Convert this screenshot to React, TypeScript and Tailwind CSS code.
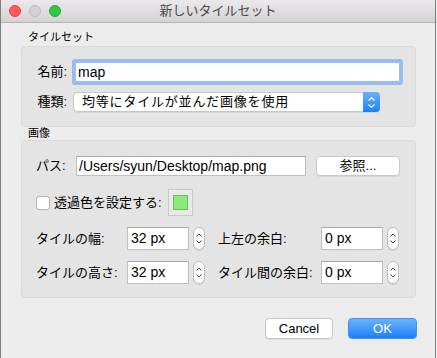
import React from "react";

const font = "font-['Liberation_Sans','Noto_Sans_CJK_JP',sans-serif]";

function Stepper() {
  return (
    <div className="w-[12px] h-[23px] rounded-[6px] border border-[#bdbdbd] bg-white flex flex-col items-center justify-center gap-[3px] shadow-[0_1px_0_rgba(0,0,0,0.08)]">
      <svg width="6" height="4" viewBox="0 0 6 4"><path d="M0.5 3.5 L3 1 L5.5 3.5" fill="none" stroke="#444" strokeWidth="1" /></svg>
      <svg width="6" height="4" viewBox="0 0 6 4"><path d="M0.5 0.5 L3 3 L5.5 0.5" fill="none" stroke="#444" strokeWidth="1" /></svg>
    </div>
  );
}

function NumField({ value }: { value: string }) {
  return (
    <div className="flex items-center gap-[4px]">
      <div className="w-[62px] h-[23px] bg-white border border-[#c0c0c0] border-t-[#a9a9a9] flex items-center pl-[3px] text-[14px] text-black">
        {value}
      </div>
      <Stepper />
    </div>
  );
}

export default function App() {
  return (
    <div className={`${font} w-[437px] h-[358px] bg-[#ececec]`}>
      <div className="w-[436px] h-[358px] border-l border-r border-[#7f7f7f] bg-[#ececec] flex flex-col">
        {/* title bar */}
        <div className="h-[23px] border-b border-[#b3b3b3] bg-gradient-to-b from-[#ebe9eb] to-[#d4d2d4] grid grid-cols-[1fr_auto_1fr] items-center">
          <div className="flex items-center gap-[8px] pl-[8px]">
            <div className="w-[12px] h-[12px] rounded-full bg-[#fc5f57] border border-[#e0443e]" />
            <div className="w-[12px] h-[12px] rounded-full bg-[#d2d1d2] border border-[#bfbebf]" />
            <div className="w-[12px] h-[12px] rounded-full bg-[#33c748] border border-[#27aa35]" />
          </div>
          <div className="text-[13px] text-[#4a4a4a] leading-[22px]">新しいタイルセット</div>
          <div />
        </div>

        {/* body */}
        <div className="flex flex-col pl-[20px]">
          <div className="text-[11px] leading-[14px] mt-[7px] pl-[7px] text-black">タイルセット</div>
          <div className="mt-[2px] w-[395px] h-[81px] rounded-[4px] border border-[#dadada] bg-[#e4e4e4] flex flex-col pt-[15px]">
            <div className="flex items-center">
              <div className="w-[46px] text-right text-[13px] text-black leading-[20px] pr-[1px]">名前:</div>
              <div className="ml-[7px] w-[325px] h-[20px] bg-white border border-[#9cbde9] shadow-[0_0_0_3px_#95bdf0] rounded-[1px] flex items-center pl-[2px] text-[14px] text-black">
                map
              </div>
            </div>
            <div className="flex items-center mt-[10px]">
              <div className="w-[46px] text-right text-[13px] text-black leading-[20px] pr-[1px]">種類:</div>
              <div className="ml-[5px] w-[307px] h-[20px] bg-white border border-[#c6c6c6] rounded-[4px] flex items-center shadow-[0_1px_0_rgba(0,0,0,0.06)]">
                <div className="flex-1 pl-[8px] text-[13px] tracking-[0.8px] text-black leading-[18px]">均等にタイルが並んだ画像を使用</div>
                <div className="w-[17px] h-[20px] -mr-px -my-px rounded-r-[4px] bg-gradient-to-b from-[#69b1fa] to-[#1a7ff8] flex flex-col items-center justify-center gap-[3px]">
                  <svg width="7" height="4" viewBox="0 0 7 4"><path d="M0.5 3.5 L3.5 0.8 L6.5 3.5" fill="none" stroke="#fff" strokeWidth="1.2" /></svg>
                  <svg width="7" height="4" viewBox="0 0 7 4"><path d="M0.5 0.5 L3.5 3.2 L6.5 0.5" fill="none" stroke="#fff" strokeWidth="1.2" /></svg>
                </div>
              </div>
            </div>
          </div>

          <div className="text-[11px] leading-[12px] mt-[0px] pl-[7px] text-black">画像</div>
          <div className="mt-[1px] w-[395px] h-[158px] rounded-[4px] border border-[#dadada] bg-[#e4e4e4] flex flex-col pt-[15px] pl-[14px]">
            <div className="flex items-center">
              <div className="w-[40px] text-[13px] text-black leading-[20px]">パス:</div>
              <div className="w-[230px] h-[20px] bg-white border border-[#c0c0c0] border-t-[#a9a9a9] flex items-center pl-[2px] text-[14px] text-black">
                /Users/syun/Desktop/map.png
              </div>
              <div className="ml-[10px] w-[84px] h-[20px] bg-white border border-[#c8c8c8] rounded-[4px] flex items-center justify-center text-[13px] text-black shadow-[0_1px_0_rgba(0,0,0,0.06)]">
                参照...
              </div>
            </div>
            <div className="flex items-center mt-[13px]">
              <div className="w-[14px] h-[14px] bg-white border border-[#b3b3b3] rounded-[3px]" />
              <div className="ml-[4px] text-[13px] text-black leading-[20px]">透過色を設定する:</div>
              <div className="ml-[6px] w-[25px] h-[27px] border border-[#c9c9c9] bg-[#e9e9e9] flex items-center justify-center">
                <div className="w-[15px] h-[15px] bg-[#89ec79] border border-[#75b86b]" />
              </div>
            </div>
            <div className="grid grid-cols-[91px_91px_103px_auto] items-center mt-[11px] gap-y-[11px]">
              <div className="text-[13px] text-black">タイルの幅:</div>
              <NumField value="32 px" />
              <div className="text-[13px] text-black">上左の余白:</div>
              <NumField value="0 px" />
              <div className="text-[13px] text-black">タイルの高さ:</div>
              <NumField value="32 px" />
              <div className="text-[13px] text-black">タイル間の余白:</div>
              <NumField value="0 px" />
            </div>
          </div>

          <div className="flex justify-end gap-[15px] mt-[20px] w-[396px]">
            <div className="w-[68px] h-[21px] bg-white border border-[#c8c8c8] rounded-[4px] flex items-center justify-center text-[13px] text-black shadow-[0_1px_0_rgba(0,0,0,0.06)]">
              Cancel
            </div>
            <div className="w-[69px] h-[21px] rounded-[4px] bg-gradient-to-b from-[#6ab3fa] to-[#1a7ef8] border border-[#3f8ff5] flex items-center justify-center text-[13px] text-white">
              OK
            </div>
          </div>
        </div>
      </div>
    </div>
  );
}
